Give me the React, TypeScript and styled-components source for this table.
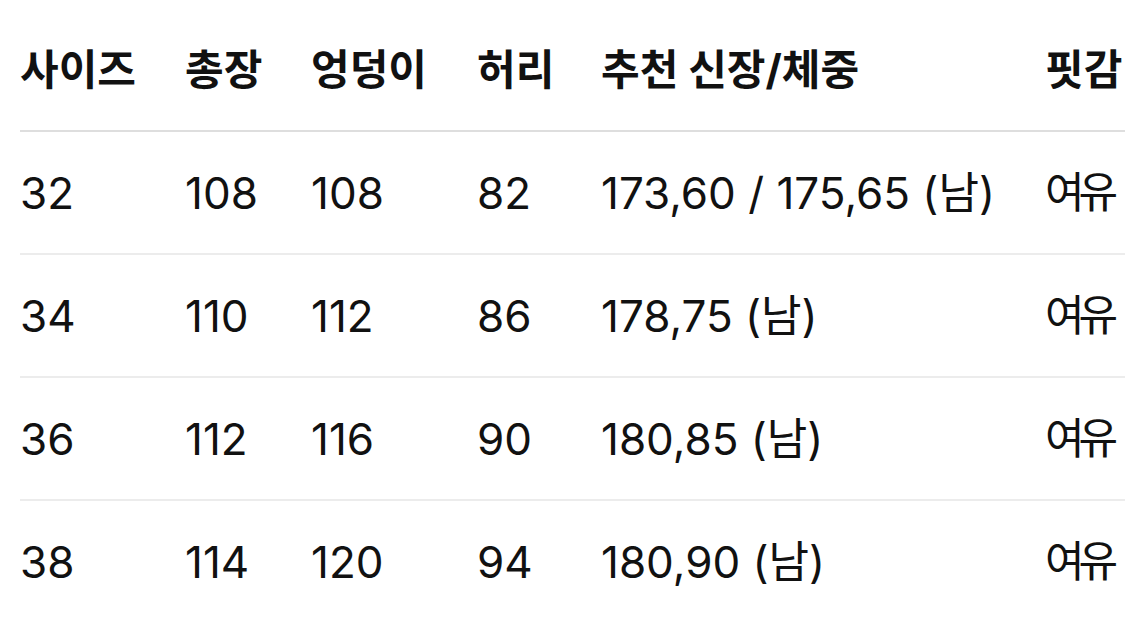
import * as React from 'react';
import styled, { createGlobalStyle } from 'styled-components';

const GlobalStyle = createGlobalStyle`
  html, body {
    margin: 0;
    padding: 0;
    background: #ffffff;
    overflow: hidden;
  }
  body {
    font-family: Inter, "Noto Sans CJK KR", sans-serif;
    color: #111111;
  }
`;

const StyledPage = styled.div`
  padding: 9px 0 0 20px;
  width: 1160px;
`;

const StyledRow = styled.div<{ $head?: boolean }>`
  display: grid;
  grid-template-columns: 165px 126px 166px 124px 444px 1fr;
  height: 121px;
  align-items: center;
  border-bottom: 2px solid ${(p) => (p.$head ? '#dedede' : '#ececec')};
  font-size: ${(p) => (p.$head ? '42px' : '44px')};
  font-weight: ${(p) => (p.$head ? 700 : 400)};

  &:last-child {
    border-bottom: none;
  }
`;

const StyledCell = styled.div<{ $kr?: boolean }>`
  white-space: nowrap;
  line-height: 1;
  font-size: ${(p) => (p.$kr ? '43px' : 'inherit')};
  letter-spacing: ${(p) => (p.$kr ? '-6px' : 'normal')};
`;

const columns = ['사이즈', '총장', '엉덩이', '허리', '추천 신장/체중', '핏감'];

const rows = [
  ['32', '108', '108', '82', '173,60 / 175,65 (남)', '여유'],
  ['34', '110', '112', '86', '178,75 (남)', '여유'],
  ['36', '112', '116', '90', '180,85 (남)', '여유'],
  ['38', '114', '120', '94', '180,90 (남)', '여유'],
];

export default function App() {
  return (
    <>
      <GlobalStyle />
      <StyledPage>
        <StyledRow $head>
          {columns.map((c) => (
            <StyledCell key={c}>{c}</StyledCell>
          ))}
        </StyledRow>
        {rows.map((r) => (
          <StyledRow key={r[0]}>
            {r.map((v, i) => (
              <StyledCell key={i} $kr={i === 5}>
                {v}
              </StyledCell>
            ))}
          </StyledRow>
        ))}
      </StyledPage>
    </>
  );
}
